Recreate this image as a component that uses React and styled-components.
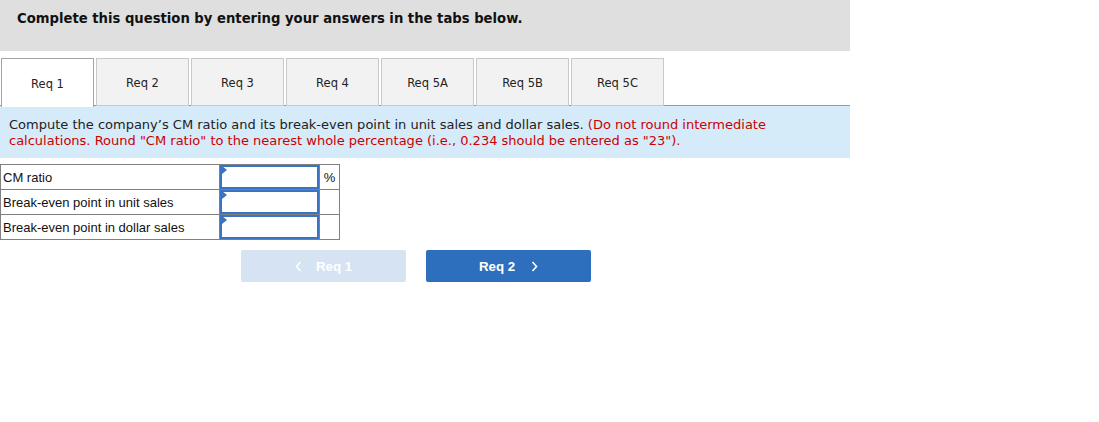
import React from "react";
import styled, { createGlobalStyle } from "styled-components";

const Global = createGlobalStyle`
  html, body { margin: 0; padding: 0; background: #fff; }
  body { font-family: "DejaVu Sans", Verdana, sans-serif; }
`;

const Page = styled.div`
  width: 850px;
`;

const Header = styled.div`
  background: #dfdfdf;
  height: 51px;
  box-sizing: border-box;
  padding: 11px 0 0 17px;
  font-size: 13.2px;
  font-weight: bold;
  color: #111;
`;

const Tabs = styled.div`
  display: flex;
  gap: 2px;
  padding: 7px 0 0 1px;
  border-bottom: 1px solid #999;
  height: 55px;
  box-sizing: border-box;
`;

const Tab = styled.div`
  width: 93px;
  height: ${(p) => (p.$active ? "49px" : "48px")};
  box-sizing: border-box;
  border: 1px solid ${(p) => (p.$active ? "#a3a3a3" : "#c9c9c9")};
  border-bottom: ${(p) => (p.$active ? "none" : "1px solid #c9c9c9")};
  background: ${(p) => (p.$active ? "#fff" : "#f2f2f2")};
  display: flex;
  align-items: center;
  justify-content: center;
  font-size: 11.5px;
  color: #222;
  position: relative;
  z-index: ${(p) => (p.$active ? 1 : 0)};
  margin-bottom: ${(p) => (p.$active ? "-1px" : "0")};
  padding-top: 1px;
`;

const Instructions = styled.div`
  background: #d6ebf9;
  height: 52px;
  box-sizing: border-box;
  padding: 11px 9px 0 9px;
  font-size: 13px;
  line-height: 15.5px;
  color: #222;
`;

const Red = styled.span`
  color: #cc0000;
`;

const Table = styled.div`
  margin-top: 6px;
  display: grid;
  grid-template-columns: 219px 100px 20px;
  width: 339px;
  border-top: 1px solid #808080;
  border-left: 1px solid #808080;
  font-family: "Liberation Sans", Arial, sans-serif;
  font-size: 13px;
  color: #111;
`;

const Cell = styled.div`
  height: 25px;
  box-sizing: border-box;
  border-right: 1px solid #808080;
  border-bottom: 1px solid #808080;
  display: flex;
  align-items: center;
  padding-left: ${(p) => (p.$label ? "2px" : "0")};
  justify-content: ${(p) => (p.$unit ? "center" : "flex-start")};
`;

const InputCell = styled.div`
  height: 25px;
  box-sizing: border-box;
  border-right: 1px solid #808080;
  border-bottom: 1px solid #808080;
  padding: 0;
`;

const InputBox = styled.div`
  position: relative;
  width: 100%;
  height: 100%;
  box-sizing: border-box;
  border: 2px solid #3a72c4;
  background: #fff;
`;

const Marker = styled.span`
  position: absolute;
  left: 0;
  top: -1px;
  width: 0;
  height: 0;
  border-top: 4px solid transparent;
  border-bottom: 4px solid transparent;
  border-left: 5px solid #3a72c4;
`;

const Nav = styled.div`
  display: flex;
  gap: 20px;
  margin: 10px 0 0 241px;
`;

const NavButton = styled.div`
  width: 165px;
  height: 32px;
  border-radius: 2px;
  background: ${(p) => (p.$disabled ? "#d5e3f3" : "#2d6ebd")};
  color: #fff;
  font-family: "Liberation Sans", Arial, sans-serif;
  font-weight: bold;
  font-size: 13.3px;
  display: flex;
  align-items: center;
  justify-content: center;
  gap: ${(p) => (p.$disabled ? "14px" : "16px")};
`;

const Chevron = styled.svg`
  width: 7px;
  height: 11px;
`;

const rows = [
  { label: "CM ratio", unit: "%" },
  { label: "Break-even point in unit sales", unit: "" },
  { label: "Break-even point in dollar sales", unit: "" },
];

const tabs = ["Req 1", "Req 2", "Req 3", "Req 4", "Req 5A", "Req 5B", "Req 5C"];

export default function App() {
  return (
    <Page>
      <Global />
      <Header>Complete this question by entering your answers in the tabs below.</Header>
      <Tabs>
        {tabs.map((t, i) => (
          <Tab key={t} $active={i === 0}>
            {t}
          </Tab>
        ))}
      </Tabs>
      <Instructions>
        Compute the company’s CM ratio and its break-even point in unit sales and dollar sales.{" "}
        <Red>
          (Do not round intermediate calculations. Round "CM ratio" to the nearest whole percentage (i.e., 0.234 should be
          entered as "23").
        </Red>
      </Instructions>
      <Table>
        {rows.map((r) => (
          <React.Fragment key={r.label}>
            <Cell $label>{r.label}</Cell>
            <InputCell>
              <InputBox>
                <Marker />
              </InputBox>
            </InputCell>
            <Cell $unit>{r.unit}</Cell>
          </React.Fragment>
        ))}
      </Table>
      <Nav>
        <NavButton $disabled>
          <Chevron viewBox="0 0 7 11">
            <path d="M5.5 1 L1.5 5.5 L5.5 10" fill="none" stroke="#fff" strokeWidth="1.6" />
          </Chevron>
          <span>Req 1</span>
        </NavButton>
        <NavButton>
          <span>Req 2</span>
          <Chevron viewBox="0 0 7 11">
            <path d="M1.5 1 L5.5 5.5 L1.5 10" fill="none" stroke="#fff" strokeWidth="1.6" />
          </Chevron>
        </NavButton>
      </Nav>
    </Page>
  );
}
